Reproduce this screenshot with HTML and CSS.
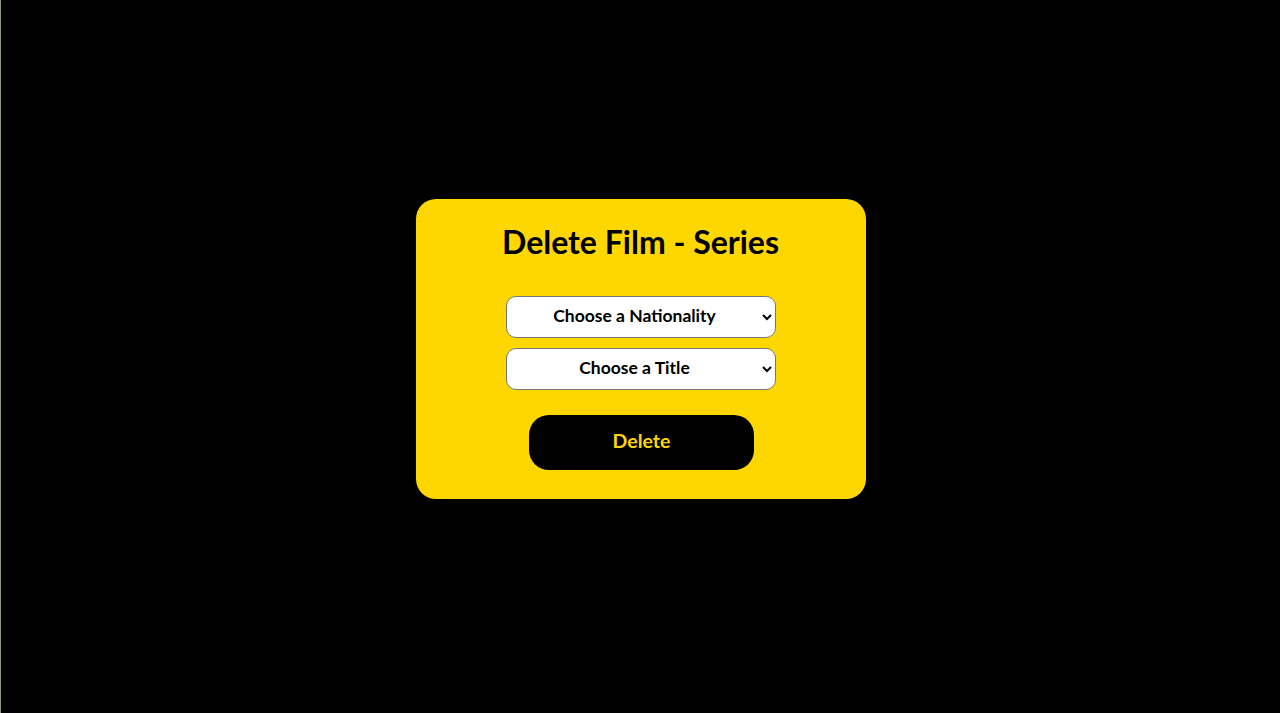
FILE: index.html
```html
<!DOCTYPE html>
<html lang="en">
<head>
<meta charset="utf-8">
<title>Delete Film - Series</title>
<link rel="stylesheet" href="styles.css">
</head>
<body>
<main class="page">
  <form class="card">
    <h1 class="card-title">Delete Film - Series</h1>
    <div class="fields">
      <select class="field">
        <option>Choose a Nationality</option>
      </select>
      <select class="field">
        <option>Choose a Title</option>
      </select>
    </div>
    <button type="button" class="btn-delete">Delete</button>
  </form>
</main>
</body>
</html>
```
FILE: styles.css
```css
html, body {
  margin: 0;
  padding: 0;
  height: 100%;
  background: #000;
}
body {
  border-left: 1px solid #8a9a7c;
  box-sizing: border-box;
  font-family: "Lato", "Noto Sans", sans-serif;
}
.page {
  display: flex;
  justify-content: center;
  padding-top: 199px;
}
.card {
  width: 450px;
  height: 300px;
  box-sizing: border-box;
  background: #ffd700;
  border-radius: 20px;
  padding: 24px 0 0;
  display: flex;
  flex-direction: column;
  align-items: center;
}
.card-title {
  margin: 0;
  font-size: 32px;
  line-height: 38px;
  font-weight: 700;
  color: #000;
}
.fields {
  margin-top: 35px;
  display: flex;
  flex-direction: column;
  gap: 10px;
}
.field {
  width: 270px;
  height: 42px;
  box-sizing: border-box;
  background: #fff;
  border: 1px solid #777;
  border-radius: 10px;
  font-family: inherit;
  font-size: 17.5px;
  font-weight: 700;
  color: #000;
  text-align: center;
  text-align-last: center;
  padding: 0 4px 4px;
}
.btn-delete {
  margin: 25px 0 0 2px;
  width: 225px;
  height: 55px;
  border: none;
  border-radius: 20px;
  background: #000;
  color: #ffd700;
  font-family: inherit;
  font-size: 19.5px;
  font-weight: 700;
  padding: 0 0 4px;
  cursor: pointer;
}
```
